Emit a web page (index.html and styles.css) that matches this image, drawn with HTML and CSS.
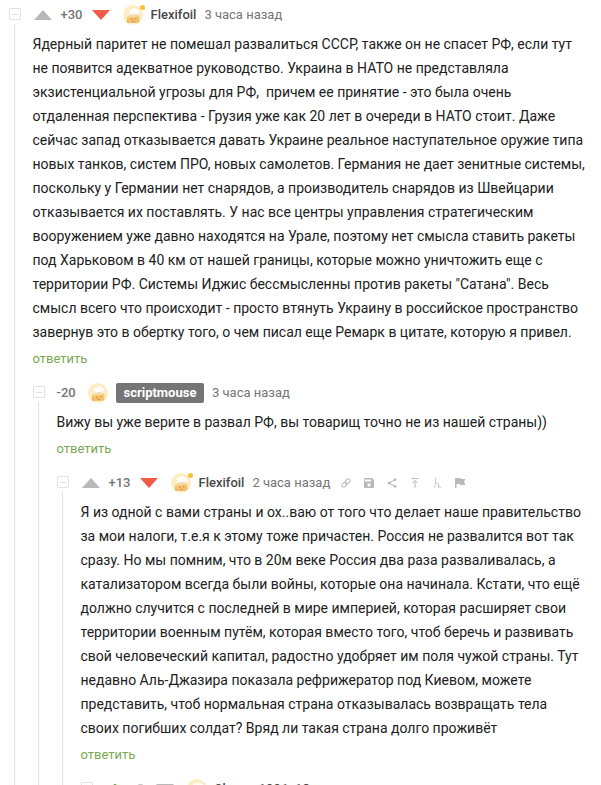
FILE: index.html
```
<!DOCTYPE html>
<html lang="ru">
<head>
<meta charset="utf-8">
<title>Комментарии</title>
<link rel="stylesheet" href="styles.css">
</head>
<body>
<svg width="0" height="0" class="defs">
  <symbol id="avatar" viewBox="0 0 20 20">
    <circle cx="10" cy="10" r="10" fill="#fcedc5"/>
    <path d="M4 12.500l1.500-1.500 10-.5 1 2v4l-2 1.500H6L4 17z" fill="#f3c36e"/>
    <path d="M5 11.500l10-1.500 1 1.500-11 1.500z" fill="#fad995"/>
    <path d="M6.500 10V7.500C5 6.500 6 4 8.500 4.500c1-2 4-2 5 0 3-.5 4 2.500 1.500 4l-1 1z" fill="#fffdf8"/>
    <path d="M6.500 10l7.500-.8" stroke="#dedbd2" stroke-width=".8"/>
    <path d="M8 13.500h1.500v1.500H8zM12 13h1.500v1.500H12zM9 16h3v1H9z" fill="#d99549"/>
    <path d="M4 16h2v1.500H4z" fill="#eaa75a"/>
  </symbol>
</svg>
<main class="comments">
  <article class="comment">
    <header class="head">
      <span class="toggle"></span><span class="up"></span><span class="score">+30</span><span class="down"></span>
      <span class="avatar online"><svg><use href="#avatar"/></svg></span><span class="name">Flexifoil</span><span class="time">3 часа назад</span>
    </header>
    <div class="branch">
      <p class="text">Ядерный паритет не помешал развалиться СССР, также он не спасет РФ, если тут<br>не появится адекватное руководство. Украина в НАТО не представляла<br>экзистенциальной угрозы для РФ,&nbsp; причем ее принятие - это была очень<br>отдаленная перспектива - Грузия уже как 20 лет в очереди в НАТО стоит. Даже<br>сейчас запад отказывается давать Украине реальное наступательное оружие типа<br>новых танков, систем ПРО, новых самолетов. Германия не дает зенитные системы,<br>поскольку у Германии нет снарядов, а производитель снарядов из Швейцарии<br>отказывается их поставлять. У нас все центры управления стратегическим<br>вооружением уже давно находятся на Урале, поэтому нет смысла ставить ракеты<br>под Харьковом в 40 км от нашей границы, которые можно уничтожить еще с<br>территории РФ. Системы Иджис бессмысленны против ракеты "Сатана". Весь<br>смысл всего что происходит - просто втянуть Украину в российское пространство<br>завернув это в обертку того, о чем писал еще Ремарк в цитате, которую я привел.</p>
      <a class="reply">ответить</a>
      <article class="comment">
        <header class="head">
          <span class="toggle"></span><span class="score only">-20</span>
          <span class="avatar"><svg><use href="#avatar"/></svg></span><span class="name badge">scriptmouse</span><span class="time">3 часа назад</span>
        </header>
        <div class="branch">
          <p class="text">Вижу вы уже верите в развал РФ, вы товарищ точно не из нашей страны))</p>
          <a class="reply">ответить</a>
          <article class="comment">
            <header class="head">
              <span class="toggle"></span><span class="up"></span><span class="score">+13</span><span class="down"></span>
              <span class="avatar online"><svg><use href="#avatar"/></svg></span><span class="name">Flexifoil</span><span class="time">2 часа назад</span>
              <span class="tools">
                <svg viewBox="0 0 12 12"><g transform="rotate(-45 6 6)" fill="none" stroke="currentColor"><rect x="0.800" y="4.200" width="5.800" height="3.600" rx="1.800"/><rect x="5.400" y="4.200" width="5.800" height="3.600" rx="1.800"/></g></svg>
                <svg viewBox="0 0 12 12"><path fill="currentColor" fill-rule="evenodd" d="M2 1h7l2 2v7a1 1 0 0 1-1 1H2a1 1 0 0 1-1-1V2a1 1 0 0 1 1-1zm0 1.500v2h6v-2zM6 6.300a1.600 1.600 0 1 0 0 3.200 1.600 1.600 0 0 0 0-3.200z"/></svg>
                <svg viewBox="0 0 12 12"><path d="M9 2.700L3 6l6 3.300" fill="none" stroke="currentColor"/><g fill="currentColor"><circle cx="9" cy="2.700" r="1.400"/><circle cx="3.300" cy="6" r="1.600"/><circle cx="9" cy="9.300" r="1.400"/></g></svg>
                <svg viewBox="0 0 12 12"><path d="M2.500 1.500h7M6 11V3.500M3.500 6L6 3.500 8.500 6" fill="none" stroke="currentColor"/></svg>
                <svg viewBox="0 0 12 12"><path d="M4.500 1v4.500L3.500 11M4.500 5.500L7.500 7v4M8.500 9l1 2" fill="none" stroke="currentColor" stroke-width=".8"/></svg>
                <svg viewBox="0 0 12 12"><path d="M1 1h5.500l.5 1h4.500L10 5l1.500 3H6.500L6 7H2.500v4H1z" fill="currentColor"/></svg>
              </span>
            </header>
            <div class="branch">
              <p class="text">Я из одной с вами страны и ох..ваю от того что делает наше правительство<br>за мои налоги, т.е.я к этому тоже причастен. Россия не развалится вот так<br>сразу. Но мы помним, что в 20м веке Россия два раза разваливалась, а<br>катализатором всегда были войны, которые она начинала. Кстати, что ещё<br>должно случится с последней в мире империей, которая расширяет свои<br>территории военным путём, которая вместо того, чтоб беречь и развивать<br>свой человеческий капитал, радостно удобряет им поля чужой страны. Тут<br>недавно Аль-Джазира показала рефрижератор под Киевом, можете<br>представить, чтоб нормальная страна отказывалась возвращать тела<br>своих погибших солдат? Вряд ли такая страна долго проживёт</p>
              <a class="reply">ответить</a>
              <article class="comment">
                <header class="head">
                  <span class="toggle"></span><span class="up green"></span><span class="ring"></span><span class="down gray"></span>
                  <span class="avatar"><svg><use href="#avatar"/></svg></span><span class="name long">Skynnn1991_18</span>
                </header>
              </article>
            </div>
          </article>
        </div>
      </article>
    </div>
  </article>
</main>
</body>
</html>
```
FILE: styles.css
```
* { box-sizing: border-box; }
html, body { margin: 0; height: 785px; overflow: hidden; background: #fff; }
body { font-family: Roboto, "Liberation Sans", sans-serif; font-size: 14px; color: #212121; }
.defs { display: block; height: 0; }
.comments { padding: 2px 0 0 9px; }
.head { display: flex; align-items: center; height: 24px; margin-bottom: -2px; padding-top: 2px; white-space: nowrap; font-size: 13px; }
.head > * { flex: none; }
.toggle { display: flex; align-items: center; justify-content: center; width: 12px; height: 12px; margin-top: -2px; border: 1px solid #e2e2e2; border-radius: 1px; }
.toggle::before { content: ""; width: 6px; height: 1px; background: #e2e2e2; }
.up, .down { width: 18px; height: 10px; background: #b9b9b9; }
.up { margin: 0 9px 0 13px; clip-path: polygon(50% 0, 100% 100%, 0 100%); }
.down { clip-path: polygon(0 0, 100% 0, 50% 100%); background: #f25a48; }
.up.green { background: #79a851; clip-path: polygon(45% 0, 55% 0, 100% 100%, 0 100%); }
.down.gray { background: #b9b9b9; }
.ring { width: 11px; height: 11px; margin: 0 10px 0 2px; border: 1.5px solid #b9b9b9; border-radius: 50%; }
.down.gray + .avatar { margin-left: 13px; }
.score { width: 31.5px; margin: -1px 0 0 -.5px; color: #757575; font-weight: 500; }
.score.only { width: 19px; margin-left: 11.5px; }
.score.only + .avatar { margin-left: 12.5px; }
.avatar { position: relative; width: 20px; height: 20px; margin-left: 13px; }
.avatar svg { display: block; width: 20px; height: 20px; }
.online::after { content: ""; position: absolute; top: 0; right: -2px; width: 5px; height: 5px; border-radius: 50%; background: #fbc02d; }
.name { margin: -2px 0 0 7.5px; color: #474747; font-weight: 500; }
.long { letter-spacing: .2px; }
.badge { margin: 0 0 0 8px; padding: 0 7.500px; height: 20px; line-height: 20px; border-radius: 2px; background: #757575; color: #fff; font-weight: 700; }
.time { margin: -2px 0 0 8px; color: #757575; }
.tools { display: flex; gap: 10.8px; margin: -1px 0 0 10px; color: #b9b9b9; }
.tools svg { display: block; width: 12px; height: 12px; }
.branch { margin-left: 5px; padding: 8px 0 0 18px; border-left: 1px solid #e2e2e2; }
.text { margin: 0 0 3px -.5px; line-height: 24px; white-space: nowrap; }
.reply { display: block; height: 24px; margin: 0 0 9px -.5px; line-height: 24px; font-size: 13px; color: #79a851; }
```
